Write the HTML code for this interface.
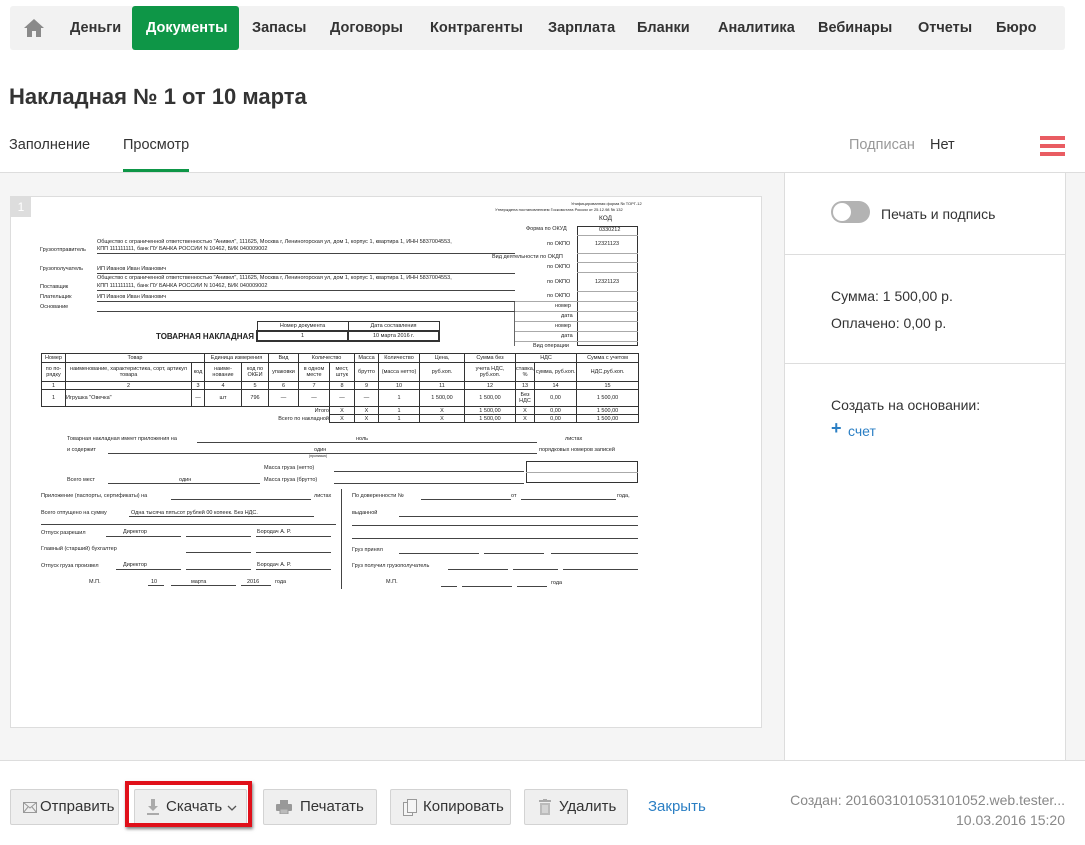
<!DOCTYPE html>
<html><head><meta charset="utf-8"><style>
*{box-sizing:border-box;margin:0;padding:0}
body{width:1085px;height:845px;position:relative;background:#fff;font-family:"Liberation Sans",Arial,sans-serif;color:#333;overflow:hidden}
.a{position:absolute;white-space:nowrap}
.nav{position:absolute;left:10px;top:6px;width:1055px;height:44px;background:#f2f2f2;border-radius:3px}
.nav span{position:absolute;top:14px;font-size:14.5px;font-weight:bold;color:#333}
.green{position:absolute;left:122px;top:0;width:107px;height:44px;background:#0e9647;border-radius:3px}
.doc{position:absolute;left:10px;top:196px;width:752px;height:532px;background:#fff;border:1px solid #ddd;font-size:5.5px;color:#222}
.doc .t{position:absolute;white-space:nowrap}
.doc .l{position:absolute;height:0;border-top:1px solid #444}
.doc .lt{position:absolute;height:0;border-top:1px solid #aaa}
table.m{position:absolute;border-collapse:collapse;table-layout:fixed;font-size:5.5px;text-align:center}
table.m td{border:1px solid #333;padding:0;line-height:6px;overflow:hidden}
.btn{position:absolute;top:789px;height:36px;background:#efefef;border:1px solid #d3d3d3;border-radius:2px;font-size:15px;color:#333;line-height:34px}
</style></head><body>
<div class="nav">
<svg class="a" style="left:13px;top:12px" width="22" height="20" viewBox="0 0 22 20"><path d="M11 1 L1 10 H4 V19 H9 V13 H13 V19 H18 V10 H21 Z" fill="#8a8a8a"/></svg>
<div class="green"></div>
<span style="left:60px">Деньги</span>
<span style="left:136px;color:#fff">Документы</span>
<span style="left:242px">Запасы</span>
<span style="left:320px">Договоры</span>
<span style="left:420px">Контрагенты</span>
<span style="left:538px">Зарплата</span>
<span style="left:627px">Бланки</span>
<span style="left:708px">Аналитика</span>
<span style="left:808px">Вебинары</span>
<span style="left:908px">Отчеты</span>
<span style="left:986px">Бюро</span>
</div>
<div class="a" style="left:9px;top:84px;font-size:22px;font-weight:bold;color:#333">Накладная № 1 от 10 марта</div>
<div class="a" style="left:9px;top:137px;font-size:14.5px">Заполнение</div>
<div class="a" style="left:123px;top:137px;font-size:14.5px">Просмотр</div>
<div class="a" style="left:123px;top:169px;width:66px;height:3px;background:#0e9647"></div>
<div class="a" style="left:849px;top:137px;font-size:14.5px;color:#999">Подписан</div>
<div class="a" style="left:930px;top:137px;font-size:14.5px">Нет</div>
<div class="a" style="left:1040px;top:136px;width:25px;height:4px;background:#e95c62"></div>
<div class="a" style="left:1040px;top:144px;width:25px;height:4px;background:#e95c62"></div>
<div class="a" style="left:1040px;top:152px;width:25px;height:4px;background:#e95c62"></div>
<div class="a" style="left:0;top:172px;width:1085px;height:588px;background:#f5f5f5;border-top:1px solid #ddd"></div>
<div class="a" style="left:784px;top:172px;width:282px;height:588px;background:#fff;border-left:1px solid #ddd;border-right:1px solid #ddd;border-top:1px solid #ddd"></div>
<div class="a" style="left:784px;top:254px;width:282px;height:1px;background:#ddd"></div>
<div class="a" style="left:784px;top:363px;width:282px;height:1px;background:#ddd"></div>
<div class="a" style="left:831px;top:201px;width:39px;height:22px;border-radius:11px;background:#b3b3b3"></div>
<div class="a" style="left:833px;top:203px;width:18px;height:18px;border-radius:9px;background:#fff"></div>
<div class="a" style="left:881px;top:206px;font-size:14px">Печать и подпись</div>
<div class="a" style="left:831px;top:288px;font-size:14px">Сумма: 1 500,00 р.</div>
<div class="a" style="left:831px;top:315px;font-size:14px">Оплачено: 0,00 р.</div>
<div class="a" style="left:831px;top:397px;font-size:14px">Создать на основании:</div>
<div class="a" style="left:831px;top:418px;font-size:18px;color:#2b7fc4;font-weight:bold">+</div>
<div class="a" style="left:848px;top:423px;font-size:14px;color:#2b7fc4">счет</div>

<div class="doc">
<div class="t" style="left:0;top:0;width:20px;height:20px;background:#ddd;color:#fff;font-size:12px;text-align:center;line-height:20px">1</div>
<div class="t" style="left:560px;top:4px;font-size:4px">Унифицированная форма № ТОРГ-12</div>
<div class="t" style="left:484px;top:10px;font-size:4px">Утверждена постановлением Госкомстата России от 25.12.98 № 132</div>
<div class="t" style="left:588px;top:18px;font-size:6.5px">КОД</div>
<div class="t" style="left:515px;top:29px">Форма по ОКУД</div>
<div class="t" style="left:536px;top:44px">по ОКПО</div>
<div class="t" style="left:481px;top:57px">Вид деятельности по ОКДП</div>
<div class="t" style="left:536px;top:67px">по ОКПО</div>
<div class="t" style="left:536px;top:82px">по ОКПО</div>
<div class="t" style="left:536px;top:96px">по ОКПО</div>
<div class="t" style="left:544px;top:106px">номер</div>
<div class="t" style="left:550px;top:116px">дата</div>
<div class="t" style="left:544px;top:126px">номер</div>
<div class="t" style="left:550px;top:136px">дата</div>
<div class="t" style="left:522px;top:146px">Вид операции</div>
<div class="t" style="left:566px;top:29px;width:61px;height:120px;border:1px solid #333"></div>
<div class="lt" style="left:566px;top:38px;width:61px"></div>
<div class="lt" style="left:566px;top:56px;width:61px"></div>
<div class="lt" style="left:566px;top:65px;width:61px"></div>
<div class="lt" style="left:566px;top:75px;width:61px"></div>
<div class="lt" style="left:566px;top:94px;width:61px"></div>
<div class="lt" style="left:503px;top:104px;width:124px"></div>
<div class="lt" style="left:503px;top:114px;width:124px"></div>
<div class="lt" style="left:503px;top:124px;width:124px"></div>
<div class="lt" style="left:503px;top:134px;width:124px"></div>
<div class="lt" style="left:503px;top:144px;width:124px"></div>
<div class="t" style="left:503px;top:104px;width:1px;height:45px;background:#666"></div>
<div class="t" style="left:588px;top:30px">0330212</div>
<div class="t" style="left:584px;top:44px">12321123</div>
<div class="t" style="left:584px;top:82px">12321123</div>
<div class="t" style="left:86px;top:42px">Общество с ограниченной ответственностью "Анивел", 111625, Москва г, Лениногорская ул, дом 1, корпус 1, квартира 1, ИНН 5837004553,</div>
<div class="t" style="left:86px;top:49px">КПП 111111111, банк ПУ БАНКА РОССИИ N 10462, БИК 040009002</div>
<div class="t" style="left:29px;top:50px">Грузоотправитель</div>
<div class="l" style="left:86px;top:56px;width:418px"></div>
<div class="t" style="left:29px;top:69px">Грузополучатель</div>
<div class="t" style="left:86px;top:69px">ИП Иванов Иван Иванович</div>
<div class="l" style="left:86px;top:76px;width:418px"></div>
<div class="t" style="left:86px;top:78px">Общество с ограниченной ответственностью "Анивел", 111625, Москва г, Лениногорская ул, дом 1, корпус 1, квартира 1, ИНН 5837004553,</div>
<div class="t" style="left:86px;top:86px">КПП 111111111, банк ПУ БАНКА РОССИИ N 10462, БИК 040009002</div>
<div class="t" style="left:29px;top:87px">Поставщик</div>
<div class="l" style="left:86px;top:93px;width:418px"></div>
<div class="t" style="left:29px;top:97px">Плательщик</div>
<div class="t" style="left:86px;top:97px">ИП Иванов Иван Иванович</div>
<div class="l" style="left:86px;top:104px;width:418px"></div>
<div class="t" style="left:29px;top:107px">Основание</div>
<div class="l" style="left:86px;top:114px;width:418px"></div>
<div class="t" style="left:145px;top:135px;font-size:8px;font-weight:bold">ТОВАРНАЯ НАКЛАДНАЯ</div>
<table class="m" style="left:245px;top:124px;width:184px"><tr><td style="height:9px">Номер документа</td><td>Дата составления</td></tr><tr><td style="height:10px;border-width:2px">1</td><td style="border-width:2px">10 марта 2016 г.</td></tr></table>
<table class="m" style="left:30px;top:156px;width:597px">
<colgroup><col style="width:24px"><col style="width:126px"><col style="width:13px"><col style="width:37px"><col style="width:27px"><col style="width:30px"><col style="width:31px"><col style="width:25px"><col style="width:24px"><col style="width:41px"><col style="width:45px"><col style="width:51px"><col style="width:19px"><col style="width:42px"><col style="width:62px"></colgroup>
<tr><td style="height:9px">Номер</td><td colspan="2">Товар</td><td colspan="2">Единица измерения</td><td>Вид</td><td colspan="2">Количество</td><td>Масса</td><td>Количество</td><td>Цена,</td><td>Сумма без</td><td colspan="2">НДС</td><td>Сумма с учетом</td></tr>
<tr><td style="height:19px">по по-рядку</td><td>наименование, характеристика, сорт, артикул товара</td><td>код</td><td>наиме-нование</td><td>код по ОКЕИ</td><td>упаковки</td><td>в одном месте</td><td>мест, штук</td><td>брутто</td><td>(масса нетто)</td><td>руб.коп.</td><td>учета НДС, руб.коп.</td><td>ставка, %</td><td>сумма, руб.коп.</td><td>НДС,руб.коп.</td></tr>
<tr><td style="height:8px">1</td><td>2</td><td>3</td><td>4</td><td>5</td><td>6</td><td>7</td><td>8</td><td>9</td><td>10</td><td>11</td><td>12</td><td>13</td><td>14</td><td>15</td></tr>
<tr><td style="height:17px">1</td><td style="text-align:left">Игрушка "Овечка"</td><td>—</td><td>шт</td><td>796</td><td>—</td><td>—</td><td>—</td><td>—</td><td>1</td><td>1 500,00</td><td>1 500,00</td><td>Без НДС</td><td>0,00</td><td>1 500,00</td></tr>
<tr><td colspan="7" style="border:none;text-align:right;height:8px">Итого</td><td>X</td><td>X</td><td>1</td><td>X</td><td>1 500,00</td><td>X</td><td>0,00</td><td>1 500,00</td></tr>
<tr><td colspan="7" style="border:none;text-align:right;height:8px">Всего по накладной</td><td>X</td><td>X</td><td>1</td><td>X</td><td>1 500,00</td><td>X</td><td>0,00</td><td>1 500,00</td></tr>
</table>
<div class="t" style="left:56px;top:239px">Товарная накладная имеет приложения на</div>
<div class="t" style="left:345px;top:239px">ноль</div><div class="l" style="left:186px;top:245px;width:340px"></div><div class="t" style="left:554px;top:239px">листах</div>
<div class="t" style="left:56px;top:250px">и содержит</div>
<div class="t" style="left:303px;top:250px">один</div><div class="l" style="left:97px;top:256px;width:429px"></div><div class="t" style="left:528px;top:250px">порядковых номеров записей</div>
<div class="t" style="left:298px;top:257px;font-size:3.5px">(прописью)</div>
<div class="t" style="left:253px;top:268px">Масса груза (нетто)</div><div class="l" style="left:323px;top:274px;width:190px"></div>
<div class="t" style="left:56px;top:280px">Всего мест</div><div class="t" style="left:168px;top:280px">один</div><div class="l" style="left:97px;top:286px;width:152px"></div>
<div class="t" style="left:253px;top:280px">Масса груза (брутто)</div><div class="l" style="left:323px;top:286px;width:190px"></div>
<div class="t" style="left:515px;top:264px;width:112px;height:22px;border:1px solid #333"></div><div class="lt" style="left:515px;top:275px;width:112px"></div>
<div class="t" style="left:330px;top:292px;width:1px;height:100px;background:#444"></div>
<div class="t" style="left:30px;top:296px">Приложение (паспорты, сертификаты) на</div><div class="l" style="left:160px;top:302px;width:140px"></div><div class="t" style="left:303px;top:296px">листах</div>
<div class="t" style="left:30px;top:313px">Всего отпущено на сумму</div><div class="t" style="left:120px;top:313px">Одна тысяча пятьсот рублей 00 копеек. Без НДС.</div><div class="l" style="left:118px;top:319px;width:185px"></div>
<div class="l" style="left:30px;top:327px;width:295px"></div>
<div class="t" style="left:30px;top:333px">Отпуск разрешил</div><div class="t" style="left:112px;top:332px">Директор</div><div class="t" style="left:246px;top:332px">Бородач А. Р.</div>
<div class="l" style="left:95px;top:339px;width:75px"></div><div class="l" style="left:175px;top:339px;width:65px"></div><div class="l" style="left:245px;top:339px;width:75px"></div>
<div class="t" style="left:30px;top:349px">Главный (старший) бухгалтер</div>
<div class="l" style="left:175px;top:355px;width:65px"></div><div class="l" style="left:245px;top:355px;width:75px"></div>
<div class="t" style="left:30px;top:366px">Отпуск груза произвел</div><div class="t" style="left:112px;top:365px">Директор</div><div class="t" style="left:246px;top:365px">Бородач А. Р.</div>
<div class="l" style="left:105px;top:372px;width:65px"></div><div class="l" style="left:175px;top:372px;width:65px"></div><div class="l" style="left:245px;top:372px;width:75px"></div>
<div class="t" style="left:78px;top:382px">М.П.</div><div class="t" style="left:140px;top:382px">10</div><div class="t" style="left:180px;top:382px">марта</div><div class="t" style="left:236px;top:382px">2016</div><div class="t" style="left:264px;top:382px">года</div>
<div class="l" style="left:137px;top:388px;width:16px"></div><div class="l" style="left:160px;top:388px;width:65px"></div><div class="l" style="left:230px;top:388px;width:30px"></div>
<div class="t" style="left:341px;top:296px">По доверенности №</div><div class="l" style="left:410px;top:302px;width:90px"></div><div class="t" style="left:500px;top:296px">от</div><div class="l" style="left:510px;top:302px;width:95px"></div><div class="t" style="left:606px;top:296px">года,</div>
<div class="t" style="left:341px;top:313px">выданной</div><div class="l" style="left:388px;top:319px;width:239px"></div>
<div class="l" style="left:341px;top:328px;width:286px"></div><div class="l" style="left:341px;top:341px;width:286px"></div>
<div class="t" style="left:341px;top:350px">Груз принял</div><div class="l" style="left:388px;top:356px;width:80px"></div><div class="l" style="left:473px;top:356px;width:60px"></div><div class="l" style="left:540px;top:356px;width:87px"></div>
<div class="t" style="left:341px;top:366px">Груз получил грузополучатель</div><div class="l" style="left:437px;top:372px;width:60px"></div><div class="l" style="left:502px;top:372px;width:45px"></div><div class="l" style="left:552px;top:372px;width:75px"></div>
<div class="t" style="left:375px;top:382px">М.П.</div><div class="l" style="left:430px;top:389px;width:16px"></div><div class="l" style="left:451px;top:389px;width:50px"></div><div class="l" style="left:506px;top:389px;width:30px"></div><div class="t" style="left:540px;top:383px">года</div>
</div>

<div class="a" style="left:0;top:760px;width:1085px;height:1px;background:#ddd"></div>
<div class="btn" style="left:10px;width:109px;padding-left:12px">
<svg class="a" style="left:12px;top:12px" width="14" height="11" viewBox="0 0 14 11"><rect x="0.5" y="0.5" width="13" height="10" fill="none" stroke="#999"/><path d="M0.5 0.5 L7 6 L13.5 0.5 M0.5 10.5 L5 5 M13.5 10.5 L9 5" fill="none" stroke="#999"/></svg>
<span style="position:absolute;left:29px">Отправить</span></div>
<div class="btn" style="left:134px;width:113px">
<svg class="a" style="left:12px;top:9px" width="12" height="16" viewBox="0 0 12 16"><path d="M4 0 H8 V7 H11 L6 12 L1 7 H4 Z" fill="#aaa"/><rect x="0" y="14" width="12" height="2" fill="#aaa"/></svg>
<span style="position:absolute;left:31px">Скачать</span>
<svg class="a" style="left:92px;top:15px" width="10" height="6" viewBox="0 0 10 6"><path d="M1 1 L5 5 L9 1" fill="none" stroke="#555" stroke-width="1.3"/></svg></div>
<div class="a" style="left:125px;top:781px;width:127px;height:46px;border:4px solid #e0101a;box-shadow:1px 2px 3px rgba(0,0,0,.5)"></div>
<div class="btn" style="left:263px;width:114px">
<svg class="a" style="left:12px;top:10px" width="16" height="14" viewBox="0 0 16 14"><rect x="4" y="0" width="8" height="4" fill="#999"/><rect x="0" y="4" width="16" height="7" rx="1" fill="#999"/><rect x="4" y="9" width="8" height="5" fill="#bbb" stroke="#999"/></svg>
<span style="position:absolute;left:36px">Печатать</span></div>
<div class="btn" style="left:390px;width:121px">
<svg class="a" style="left:12px;top:9px" width="14" height="17" viewBox="0 0 14 17"><rect x="0.5" y="3.5" width="9" height="13" fill="#f5f5f5" stroke="#999"/><rect x="4.5" y="0.5" width="9" height="13" fill="#f5f5f5" stroke="#999"/></svg>
<span style="position:absolute;left:32px">Копировать</span></div>
<div class="btn" style="left:524px;width:104px">
<svg class="a" style="left:14px;top:9px" width="12" height="16" viewBox="0 0 12 16"><rect x="0" y="1" width="12" height="2" fill="#aaa"/><rect x="4" y="0" width="4" height="2" fill="#aaa"/><path d="M1 4 H11 V16 H1 Z" fill="#bbb"/><path d="M4 6 V14 M6 6 V14 M8 6 V14" stroke="#eee"/></svg>
<span style="position:absolute;left:34px">Удалить</span></div>
<div class="a" style="left:648px;top:798px;font-size:15px;color:#2b7fc4">Закрыть</div>
<div class="a" style="right:20px;top:792px;font-size:14px;color:#888">Создан: 201603101053101052.web.tester...</div>
<div class="a" style="right:20px;top:812px;font-size:14px;color:#888">10.03.2016 15:20</div>
</body></html>
